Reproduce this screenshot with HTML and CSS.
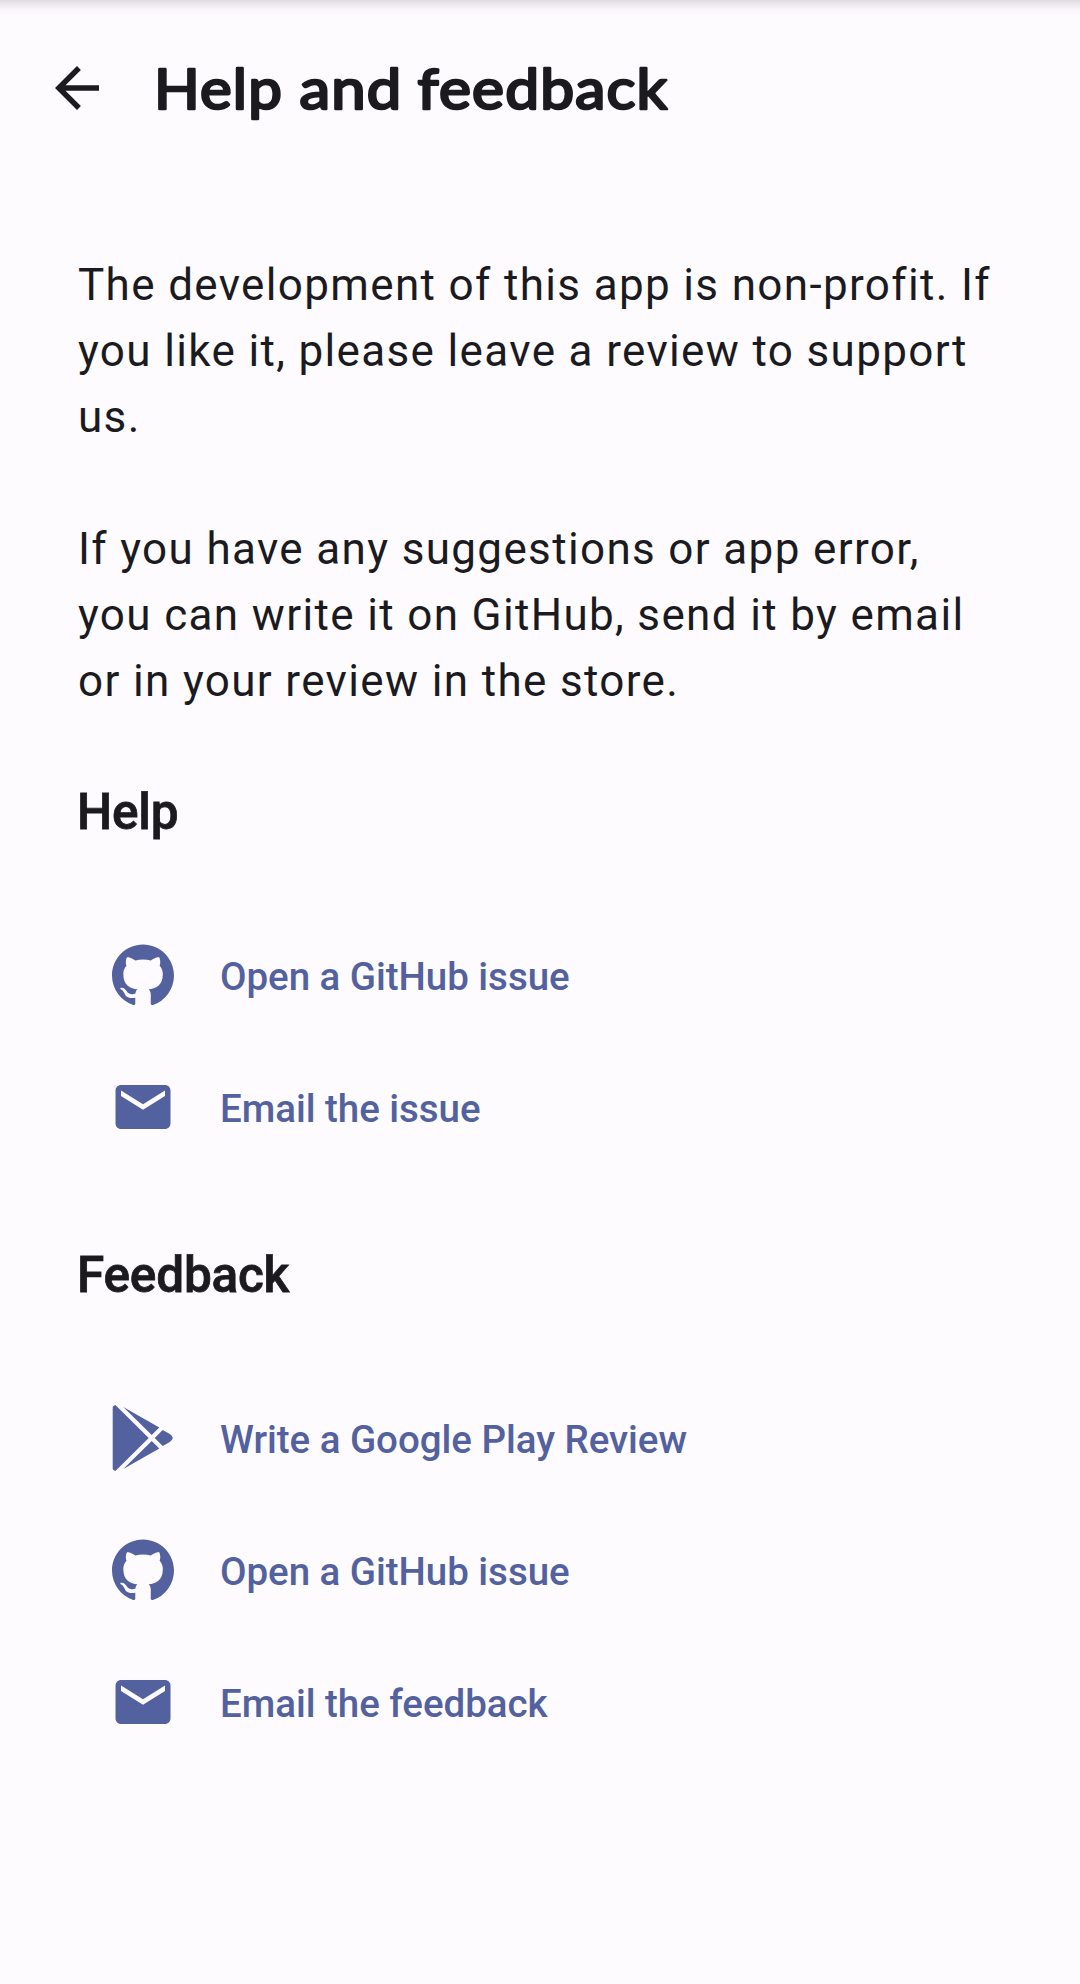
FILE: index.html
```html
<!DOCTYPE html>
<html lang="en">
<head>
<meta charset="utf-8">
<title>Help and feedback</title>
<link rel="stylesheet" href="styles.css">
</head>
<body>
<svg class="symbols" aria-hidden="true">
  <symbol id="github" viewBox="0 0 66 66"><path transform="translate(2 2.6) scale(3.875)" d="M8 0C3.58 0 0 3.58 0 8c0 3.54 2.29 6.53 5.47 7.59.4.07.55-.17.55-.38 0-.19-.01-.82-.01-1.49-2.01.37-2.53-.49-2.69-.94-.09-.23-.48-.94-.82-1.13-.28-.15-.68-.52-.01-.53.63-.01 1.08.58 1.23.82.72 1.21 1.87.87 2.33.66.07-.52.28-.87.51-1.07-1.78-.2-3.64-.89-3.64-3.95 0-.87.31-1.59.82-2.15-.08-.2-.36-1.02.08-2.12 0 0 .67-.21 2.2.82.64-.18 1.32-.27 2-.27s1.36.09 2 .27c1.53-1.04 2.2-.82 2.2-.82.44 1.1.16 1.92.08 2.12.51.56.82 1.27.82 2.15 0 3.07-1.87 3.75-3.65 3.95.29.25.54.73.54 1.48 0 1.07-.01 1.93-.01 2.2 0 .21.15.46.55.38A8.01 8.01 0 0 0 16 8c0-4.42-3.58-8-8-8z"/></symbol>
  <symbol id="mail" viewBox="0 0 24 24"><path d="M20 4H4c-1.100 0-1.990.9-1.990 2L2 18c0 1.100.9 2 2 2h16c1.100 0 2-.9 2-2V6c0-1.100-.9-2-2-2zm0 4l-8 5-8-5V6l8 5 8-5v2z"/></symbol>
  <symbol id="play" viewBox="0 0 66 66"><path d="M2.700 2Q3.500.3 5.400 0L38.700 33 5.400 66Q3.500 65.700 2.700 64ZM13.300 2L49.300 22.400 41.700 29.900ZM13.300 64L49.300 43.600 41.700 36.100ZM52.700 25L59 28.600Q62.700 31 62.700 33T59 37.400L52.700 41 44.700 33Z"/></symbol>
</svg>
<header class="bar">
  <svg class="icon back" viewBox="0 0 24 24"><path d="M20 11H7.830l5.590-5.590L12 4l-8 8 8 8 1.410-1.410L7.830 13H20v-2z"/></svg>
  <svg class="title" role="heading" aria-level="1" viewBox="0 0 540 88"><text y="64.500"><tspan x="-2" textLength="129" lengthAdjust="spacingAndGlyphs">Help</tspan> <tspan x="143.500" textLength="103" lengthAdjust="spacingAndGlyphs">and</tspan> <tspan x="261.500" textLength="251" lengthAdjust="spacingAndGlyphs">feedback</tspan></text></svg>
</header>
<main class="content">
  <p class="copy">The development of this app is non-profit. If you like it, please leave a review to support us.</p>
  <p class="copy">If you have any suggestions or app error, you can write it on GitHub, send it by email or in your review in the store.</p>
  <section class="group">
    <h2>Help</h2>
    <a class="action"><svg class="icon"><use href="#github"/></svg><span>Open a GitHub issue</span></a>
    <a class="action"><svg class="icon"><use href="#mail"/></svg><span>Email the issue</span></a>
  </section>
  <section class="group">
    <h2>Feedback</h2>
    <a class="action"><svg class="icon"><use href="#play"/></svg><span>Write a Google Play Review</span></a>
    <a class="action"><svg class="icon"><use href="#github"/></svg><span>Open a GitHub issue</span></a>
    <a class="action"><svg class="icon"><use href="#mail"/></svg><span>Email the feedback</span></a>
  </section>
</main>
</body>
</html>
```
FILE: styles.css
```css
body {
  margin: 0;
  min-height: 1984px;
  background: linear-gradient(#dddbde 0, #ebe8ec 4px, #f8f4f9 9px, #fefbff 16px) no-repeat 0 0 / 100% 16px, #fefbff;
  color: #1b1b1f;
  font-family: Roboto, sans-serif;
}
.symbols { display: none; }
.icon {
  width: 66px;
  height: 66px;
  flex: none;
  fill: currentColor;
}
.bar {
  display: flex;
  align-items: center;
  height: 176px;
  padding-left: 44px;
  gap: 46px;
}
.title {
  width: 540px;
  height: 88px;
  overflow: visible;
  font-family: Lato, sans-serif;
  font-size: 56px;
  font-weight: 400;
  letter-spacing: 1.1px;
  fill: currentColor;
  stroke: currentColor;
  stroke-width: 2.6;
  stroke-linejoin: round;
}
.content { padding: 76px 77px 0; }
.copy {
  margin: 0 0 66px;
  padding-left: 1px;
  font-size: 44px;
  line-height: 66px;
  letter-spacing: 1.35px;
}
.group { margin-bottom: 69px; }
h2 {
  margin: 0 0 64px;
  font-size: 49.5px;
  line-height: 66px;
  font-weight: 500;
  letter-spacing: -0.2px;
  -webkit-text-stroke: 0.8px currentColor;
}
.copy + .group { margin-top: -1px; }
.action {
  display: flex;
  align-items: center;
  gap: 44px;
  height: 132px;
  padding-left: 33px;
  color: #53629e;
  font-size: 38.5px;
  font-weight: 500;
  letter-spacing: -0.04px;
}
.action span { padding-top: 3px; }
```
